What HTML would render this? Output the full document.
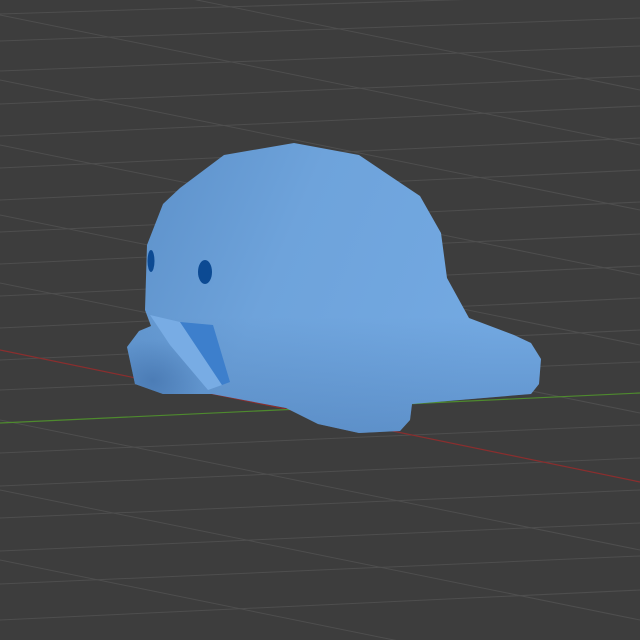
<!DOCTYPE html>
<html><head><style>html,body{margin:0;padding:0;background:#3d3d3d;width:640px;height:640px;overflow:hidden}svg{display:block}</style></head>
<body>
<svg width="640" height="640" viewBox="0 0 640 640" xmlns="http://www.w3.org/2000/svg">
<defs>
<linearGradient id="b" x1="0" y1="0" x2="1" y2="0.3">
<stop offset="0" stop-color="#5b8fc8"/>
<stop offset="0.45" stop-color="#6ea3db"/>
<stop offset="1" stop-color="#73a9e2"/>
</linearGradient>
<linearGradient id="v" x1="0" y1="0" x2="0" y2="1">
<stop offset="0" stop-color="#3f6ea8" stop-opacity="0"/>
<stop offset="0.6" stop-color="#3f6ea8" stop-opacity="0"/>
<stop offset="0.85" stop-color="#3f6ea8" stop-opacity="0.25"/>
<stop offset="1" stop-color="#3f6ea8" stop-opacity="0.4"/>
</linearGradient>
<radialGradient id="sh" cx="0.3" cy="0.8" r="0.6">
<stop offset="0" stop-color="#3f6ea8" stop-opacity="0.6"/>
<stop offset="1" stop-color="#3f6ea8" stop-opacity="0"/>
</radialGradient>
</defs>
<rect width="640" height="640" fill="#3d3d3d"/>
<g stroke="#4e4e4e" stroke-width="1">
<line x1="0" y1="14" x2="640" y2="-6"/>
<line x1="0" y1="41" x2="640" y2="18"/>
<line x1="0" y1="71" x2="640" y2="46"/>
<line x1="0" y1="104" x2="640" y2="76"/>
<line x1="0" y1="136" x2="640" y2="106"/>
<line x1="0" y1="168" x2="640" y2="138"/>
<line x1="0" y1="200" x2="640" y2="170"/>
<line x1="0" y1="232" x2="640" y2="202"/>
<line x1="0" y1="264" x2="640" y2="234"/>
<line x1="0" y1="296" x2="640" y2="266"/>
<line x1="0" y1="328" x2="640" y2="298"/>
<line x1="0" y1="360" x2="640" y2="330"/>
<line x1="0" y1="390" x2="640" y2="362"/>
<line x1="0" y1="453" x2="640" y2="425"/>
<line x1="0" y1="486" x2="640" y2="458"/>
<line x1="0" y1="518" x2="640" y2="490"/>
<line x1="0" y1="551" x2="640" y2="523"/>
<line x1="0" y1="584" x2="640" y2="556"/>
<line x1="0" y1="620" x2="640" y2="590"/>
<line x1="0" y1="-40" x2="640" y2="90"/>
<line x1="0" y1="15" x2="640" y2="145"/>
<line x1="0" y1="80" x2="640" y2="210"/>
<line x1="0" y1="145" x2="640" y2="275"/>
<line x1="0" y1="215" x2="640" y2="345"/>
<line x1="0" y1="283" x2="640" y2="413"/>
<line x1="0" y1="420" x2="640" y2="550"/>
<line x1="0" y1="490" x2="640" y2="620"/>
<line x1="0" y1="560" x2="640" y2="690"/>
</g>
<line x1="0" y1="350" x2="640" y2="482" stroke="#8a2e2e" stroke-width="1.2"/>
<line x1="0" y1="423" x2="640" y2="393" stroke="#4e8a2e" stroke-width="1.2"/>
<path d="M294,143 L359,155 L408,188 L420,196 L441,233 L447,278 L469,318 L514,335 L531,343 L541,359 L539,384 L531,394 L412,404 L410,420 L400,431 L359,433 L318,424 L286,408 L212,394 L163,394 L135,384 L127,347 L139,331 L151,326 L145,310 L147,245 L163,204 L180,188 L224,155 Z" fill="url(#b)"/>
<path d="M294,143 L359,155 L408,188 L420,196 L441,233 L447,278 L469,318 L514,335 L531,343 L541,359 L539,384 L531,394 L412,404 L410,420 L400,431 L359,433 L318,424 L286,408 L212,394 L163,394 L135,384 L127,347 L139,331 L151,326 L145,310 L147,245 L163,204 L180,188 L224,155 Z" fill="url(#v)"/>
<path d="M127,347 L139,331 L151,326 L170,345 L208,390 L212,394 L163,394 L135,384 Z" fill="url(#sh)"/>
<path d="M150,315 L180,322 L222,385 L208,390 L170,345 Z" fill="#78ace4"/>
<path d="M180,322 L213,325 L230,382 L222,385 Z" fill="#3d7fcc"/>
<ellipse cx="151" cy="261" rx="3.5" ry="11" fill="#0c4a93"/>
<ellipse cx="205" cy="272" rx="7" ry="12" fill="#0c4a93"/>
</svg>
</body></html>
